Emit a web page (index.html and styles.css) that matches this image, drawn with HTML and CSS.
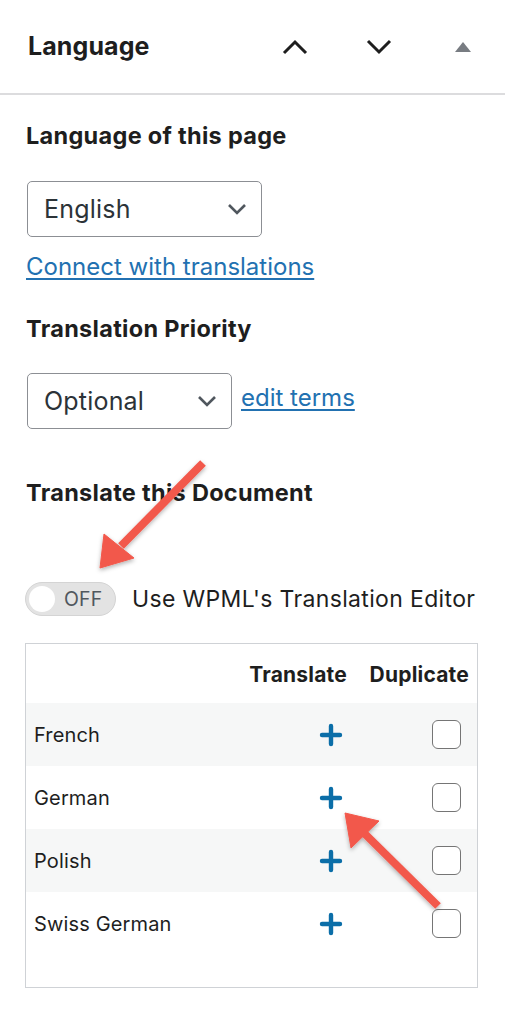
FILE: index.html
```html
<!DOCTYPE html>
<html lang="en">
<head>
<meta charset="utf-8">
<title>Language</title>
<link rel="stylesheet" href="styles.css">
</head>
<body>
<div class="panel">
  <div class="panel-header">
    <h2 class="panel-title">Language</h2>
    <button class="hbtn" aria-label="Move up">
      <svg width="26" height="16" viewBox="0 0 26 16"><path d="M2 14 L13 3 L24 14" fill="none" stroke="#1e1e1e" stroke-width="3"/></svg>
    </button>
    <button class="hbtn" aria-label="Move down">
      <svg width="26" height="16" viewBox="0 0 26 16"><path d="M2 2 L13 13 L24 2" fill="none" stroke="#1e1e1e" stroke-width="3"/></svg>
    </button>
    <button class="hbtn" aria-label="Toggle panel">
      <svg width="16" height="10" viewBox="0 0 16 10"><path d="M8 0 L16 10 L0 10 Z" fill="#787c82"/></svg>
    </button>
  </div>

  <div class="panel-body">
    <h3 class="section-title first">Language of this page</h3>
    <div class="select select-lang">
      <span>English</span>
      <svg class="caret" width="20" height="12" viewBox="0 0 20 12"><path d="M2 2 L10 10 L18 2" fill="none" stroke="#50575e" stroke-width="2.6"/></svg>
    </div>
    <a class="link connect" href="#">Connect with translations</a>

    <h3 class="section-title priority">Translation Priority</h3>
    <div class="priority-row">
      <div class="select select-priority">
        <span>Optional</span>
        <svg class="caret" width="20" height="12" viewBox="0 0 20 12"><path d="M2 2 L10 10 L18 2" fill="none" stroke="#50575e" stroke-width="2.6"/></svg>
      </div>
      <a class="link" href="#">edit terms</a>
    </div>

    <h3 class="section-title translate-doc">Translate this Document</h3>

    <div class="toggle-row">
      <div class="toggle">
        <span class="knob"></span>
        <span class="toggle-text">OFF</span>
      </div>
      <span class="toggle-label">Use WPML's Translation Editor</span>
    </div>

    <div class="langs">
      <div class="lrow head">
        <span></span>
        <span class="th">Translate</span>
        <span class="th dup">Duplicate</span>
      </div>
      <div class="lrow alt">
        <span class="name">French</span>
        <span class="plus-cell"><svg width="24" height="24" viewBox="0 0 24 24"><path d="M12 3 V21 M3 12 H21" stroke="#0b6ea8" stroke-width="4.4" stroke-linecap="round"/></svg></span>
        <span class="cb-cell"><span class="cb"></span></span>
      </div>
      <div class="lrow">
        <span class="name">German</span>
        <span class="plus-cell"><svg width="24" height="24" viewBox="0 0 24 24"><path d="M12 3 V21 M3 12 H21" stroke="#0b6ea8" stroke-width="4.4" stroke-linecap="round"/></svg></span>
        <span class="cb-cell"><span class="cb"></span></span>
      </div>
      <div class="lrow alt">
        <span class="name">Polish</span>
        <span class="plus-cell"><svg width="24" height="24" viewBox="0 0 24 24"><path d="M12 3 V21 M3 12 H21" stroke="#0b6ea8" stroke-width="4.4" stroke-linecap="round"/></svg></span>
        <span class="cb-cell"><span class="cb"></span></span>
      </div>
      <div class="lrow">
        <span class="name">Swiss German</span>
        <span class="plus-cell"><svg width="24" height="24" viewBox="0 0 24 24"><path d="M12 3 V21 M3 12 H21" stroke="#0b6ea8" stroke-width="4.4" stroke-linecap="round"/></svg></span>
        <span class="cb-cell"><span class="cb"></span></span>
      </div>
    </div>
  </div>

  <svg class="arrows" width="505" height="1024" viewBox="0 0 505 1024">
    <defs>
      <filter id="sh" x="-20%" y="-20%" width="140%" height="140%">
        <feDropShadow dx="0" dy="2" stdDeviation="2" flood-color="#000" flood-opacity="0.3"/>
      </filter>
    </defs>
    <g filter="url(#sh)" fill="#f2584b" stroke="#f2584b">
      <line x1="203" y1="463" x2="121" y2="546" stroke-width="8"/>
      <polygon points="100,568 104,534 134,558" stroke-width="1" stroke-linejoin="round"/>
      <line x1="438" y1="906" x2="364" y2="833" stroke-width="8"/>
      <polygon points="345,813 379,821 351,848" stroke-width="1" stroke-linejoin="round"/>
    </g>
  </svg>
</div>
</body>
</html>
```

FILE: styles.css
```css
* { box-sizing: border-box; }

html, body {
  margin: 0;
  padding: 0;
  background: #fff;
}

body {
  font-family: Inter, "Noto Sans", "Liberation Sans", sans-serif;
  color: #1e1e1e;
}

.panel {
  position: relative;
  width: 505px;
  height: 1024px;
  overflow: hidden;
}

.panel-header {
  display: flex;
  align-items: center;
  height: 95px;
  padding-left: 28px;
  border-bottom: 2px solid #dcdcde;
}

.panel-title {
  flex: 1;
  margin: 0;
  font-size: 25px;
  font-weight: 700;
  letter-spacing: 0.1px;
  line-height: 30px;
  padding-bottom: 2px;
}

.hbtn {
  width: 84px;
  height: 60px;
  border: 0;
  background: none;
  padding: 0;
  display: flex;
  align-items: center;
  justify-content: center;
}

.panel-body {
  padding-left: 26px;
  padding-right: 26px;
}

.section-title {
  margin: 0;
  font-size: 23.5px;
  font-weight: 700;
  line-height: 28px;
  letter-spacing: 0.3px;
}

.section-title.first { margin-top: 27px; }
.section-title.priority { margin-top: 34px; }
.section-title.translate-doc { margin-top: 50px; }

.select {
  display: flex;
  align-items: center;
  justify-content: space-between;
  height: 56px;
  border: 1px solid #8c8f94;
  border-radius: 5px;
  padding: 0 14px 0 16px;
  font-size: 25px;
  letter-spacing: 0.2px;
  color: #2c3338;
  margin-left: 1px;
}

.select-lang {
  width: 235px;
  margin-top: 31px;
}

.select-priority {
  width: 205px;
}

.caret { flex: none; }

.link {
  color: #2271b1;
  text-decoration: underline;
  text-underline-offset: 3px;
  text-decoration-thickness: 1.5px;
  font-size: 24px;
  line-height: 28px;
}

.connect {
  display: block;
  margin-top: 16px;
}

.priority-row {
  display: flex;
  align-items: center;
  gap: 9px;
  margin-top: 30px;
}

.priority-row .link {
  margin-top: -6px;
}

.toggle-row {
  display: flex;
  align-items: center;
  gap: 16px;
  margin-top: 75px;
  margin-left: -1px;
}

.toggle {
  flex: none;
  display: flex;
  align-items: center;
  width: 91px;
  height: 34px;
  border-radius: 17px;
  background: #e3e3e3;
  border: 1px solid #d4d4d4;
  padding-left: 3px;
}

.knob {
  width: 26px;
  height: 26px;
  border-radius: 50%;
  background: #fff;
}

.toggle-text {
  margin-left: 9px;
  font-size: 19.5px;
  color: #50575e;
  letter-spacing: 0.2px;
}

.toggle-label {
  font-size: 23px;
  color: #1e1e1e;
  letter-spacing: 0.35px;
  white-space: nowrap;
}

.langs {
  margin-top: 27px;
  margin-left: -1px;
  width: 453px;
  height: 345px;
  border: 1px solid #cfd2d6;
}

.lrow {
  display: grid;
  grid-template-columns: 1fr 120px 121px;
  align-items: center;
  height: 63px;
}

.lrow.head {
  height: 59px;
}

.lrow.alt {
  background: #f6f7f7;
}

.th {
  text-align: right;
  padding-right: 9px;
  font-size: 21px;
  font-weight: 700;
  letter-spacing: 0.2px;
  padding-top: 2px;
  white-space: nowrap;
}

.th.dup {
  padding-right: 8px;
}

.name {
  padding-left: 8px;
  font-size: 20px;
  letter-spacing: 0.15px;
  color: #1e1e1e;
}

.plus-cell {
  display: flex;
  justify-content: flex-end;
  padding-right: 13px;
}

.plus-cell svg { display: block; }

.cb-cell {
  display: flex;
  justify-content: flex-end;
  padding-right: 16px;
}

.cb {
  width: 29px;
  height: 29px;
  border: 1.5px solid #757575;
  border-radius: 6px;
  background: #fff;
}

.arrows {
  position: absolute;
  left: 0;
  top: 0;
  pointer-events: none;
}
```
